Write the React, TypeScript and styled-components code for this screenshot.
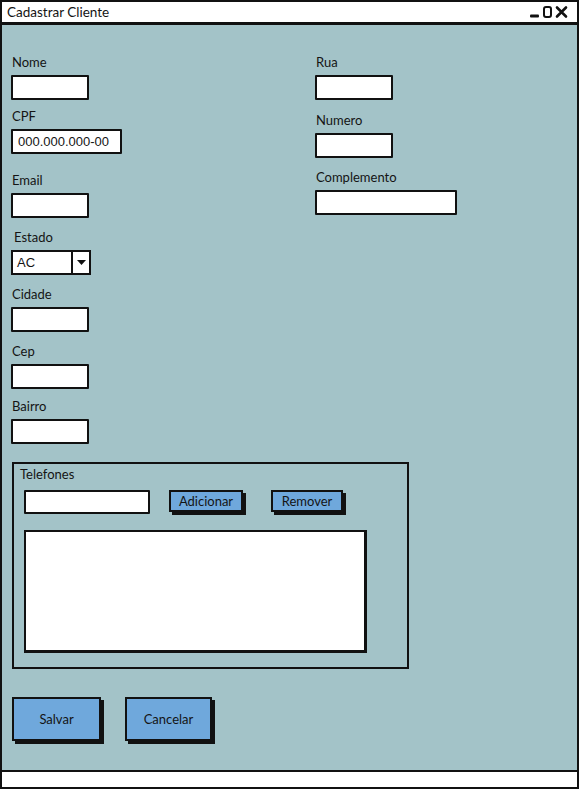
import React from "react";
import styled, { createGlobalStyle } from "styled-components";

const GlobalStyle = createGlobalStyle`
  html, body {
    margin: 0;
    padding: 0;
    background: #ffffff;
  }
  * {
    box-sizing: border-box;
  }
`;

const Window = styled.div`
  width: 579px;
  height: 789px;
  border: 2px solid #111;
  display: flex;
  flex-direction: column;
  font-family: Lato, "Noto Sans", sans-serif;
  font-size: 13px;
  color: #141414;
  background: #fff;
`;

const TitleBar = styled.div`
  height: 23px;
  border-bottom: 3px solid #111;
  display: flex;
  align-items: center;
  justify-content: space-between;
  padding: 0 6px 0 5px;
  background: #fff;
`;

const Title = styled.span`
  font-size: 13.5px;
  line-height: 14px;
`;

const Controls = styled.svg`
  display: block;
`;

const Body = styled.div`
  flex: 1;
  background: #a3c3c8;
  padding: 30px 0 0 9px;
  display: flex;
  flex-direction: column;
`;

const StatusBar = styled.div`
  height: 17px;
  border-top: 2px solid #111;
  background: #fff;
`;

const Columns = styled.div`
  display: flex;
`;

const Column = styled.div<{ $width?: number }>`
  display: flex;
  flex-direction: column;
  width: ${p => (p.$width ? `${p.$width}px` : "auto")};
`;

const Field = styled.div<{ $mt?: number }>`
  display: flex;
  flex-direction: column;
  align-items: flex-start;
  margin-top: ${p => p.$mt ?? 0}px;
`;

const Label = styled.span<{ $indent?: number }>`
  line-height: 14px;
  height: 14px;
  margin-bottom: 6px;
  padding-left: ${p => 1 + (p.$indent ?? 0)}px;
`;

const TextBox = styled.div<{ $w: number; $h?: number }>`
  width: ${p => p.$w}px;
  height: ${p => p.$h ?? 25}px;
  background: #fff;
  border: 2px solid #111;
  border-radius: 1px;
  font-family: "Liberation Sans", Arial, sans-serif;
  font-size: 13px;
  display: flex;
  align-items: center;
  padding-left: 5px;
`;

const Select = styled.div`
  width: 80px;
  height: 25px;
  background: #fff;
  border: 2px solid #111;
  display: flex;
  font-family: "Liberation Sans", Arial, sans-serif;
  font-size: 13px;
`;

const SelectValue = styled.div`
  flex: 1;
  display: flex;
  align-items: center;
  padding-left: 4px;
  border-right: 2px solid #111;
`;

const SelectArrow = styled.div`
  width: 16px;
  display: flex;
  align-items: center;
  justify-content: center;
`;

const Group = styled.div`
  margin-top: 18px;
  margin-left: 1px;
  width: 397px;
  height: 207px;
  border: 2px solid #111;
  padding: 3px 0 0 10px;
  display: flex;
  flex-direction: column;
`;

const GroupLabel = styled.span`
  line-height: 14px;
  margin-left: -4px;
`;

const GroupRow = styled.div`
  display: flex;
  align-items: flex-start;
  margin-top: 9px;
`;

const SmallButton = styled.button<{ $w: number; $ml: number }>`
  width: ${p => p.$w + 3}px;
  height: 25px;
  margin-left: ${p => p.$ml}px;
  padding: 0 3px 3px 0;
  border: none;
  background: transparent;
  font-family: Lato, "Noto Sans", sans-serif;
  font-size: 13px;
  color: #141414;

  span {
    display: flex;
    align-items: center;
    justify-content: center;
    width: 100%;
    height: 100%;
    background: #6fa8dc;
    border: 2px solid #111;
    box-shadow: 3px 3px 0 #111;
  }
`;

const ListBox = styled.div`
  margin-top: 15px;
  width: 343px;
  height: 123px;
  background: #fff;
  border: 2px solid #111;
  border-right-width: 3px;
  border-bottom-width: 3px;
`;

const ButtonRow = styled.div`
  display: flex;
  gap: 24px;
  margin-top: 28px;
  margin-left: 1px;
`;

const BigButton = styled.button<{ $w: number }>`
  width: ${p => p.$w}px;
  height: 44px;
  background: #6fa8dc;
  border: 2px solid #111;
  box-shadow: 3px 3px 0 #111;
  font-family: Lato, "Noto Sans", sans-serif;
  font-size: 13px;
  color: #141414;
  padding: 0;
`;

export default function App() {
  return (
    <>
      <GlobalStyle />
      <Window>
        <TitleBar>
          <Title>Cadastrar Cliente</Title>
          <Controls width="42" height="14" viewBox="0 0 42 14">
            <rect x="1" y="9.5" width="9" height="3" rx="1" fill="#111" />
            <rect x="15" y="2" width="7" height="10" rx="2" fill="none" stroke="#111" strokeWidth="2" />
            <path d="M28 2.5 L37 11.5 M37 2.5 L28 11.5" stroke="#111" strokeWidth="2.6" strokeLinecap="round" />
          </Controls>
        </TitleBar>
        <Body>
          <Columns>
            <Column $width={304}>
              <Field>
                <Label>Nome</Label>
                <TextBox $w={78} />
              </Field>
              <Field $mt={9}>
                <Label>CPF</Label>
                <TextBox $w={111}>000.000.000-00</TextBox>
              </Field>
              <Field $mt={19}>
                <Label>Email</Label>
                <TextBox $w={78} />
              </Field>
              <Field $mt={12}>
                <Label $indent={2}>Estado</Label>
                <Select>
                  <SelectValue>AC</SelectValue>
                  <SelectArrow>
                    <svg width="9" height="5" viewBox="0 0 9 5">
                      <path d="M0 0 L9 0 L4.5 5 Z" fill="#111" />
                    </svg>
                  </SelectArrow>
                </Select>
              </Field>
              <Field $mt={12}>
                <Label>Cidade</Label>
                <TextBox $w={78} />
              </Field>
              <Field $mt={12}>
                <Label>Cep</Label>
                <TextBox $w={78} />
              </Field>
              <Field $mt={10}>
                <Label>Bairro</Label>
                <TextBox $w={78} />
              </Field>
            </Column>
            <Column>
              <Field>
                <Label>Rua</Label>
                <TextBox $w={78} />
              </Field>
              <Field $mt={13}>
                <Label>Numero</Label>
                <TextBox $w={78} />
              </Field>
              <Field $mt={12}>
                <Label>Complemento</Label>
                <TextBox $w={142} />
              </Field>
            </Column>
          </Columns>
          <Group>
            <GroupLabel>Telefones</GroupLabel>
            <GroupRow>
              <TextBox $w={126} $h={24} />
              <SmallButton $w={74} $ml={19}>
                <span>Adicionar</span>
              </SmallButton>
              <SmallButton $w={72} $ml={25}>
                <span>Remover</span>
              </SmallButton>
            </GroupRow>
            <ListBox />
          </Group>
          <ButtonRow>
            <BigButton $w={89}>Salvar</BigButton>
            <BigButton $w={87}>Cancelar</BigButton>
          </ButtonRow>
        </Body>
        <StatusBar />
      </Window>
    </>
  );
}
